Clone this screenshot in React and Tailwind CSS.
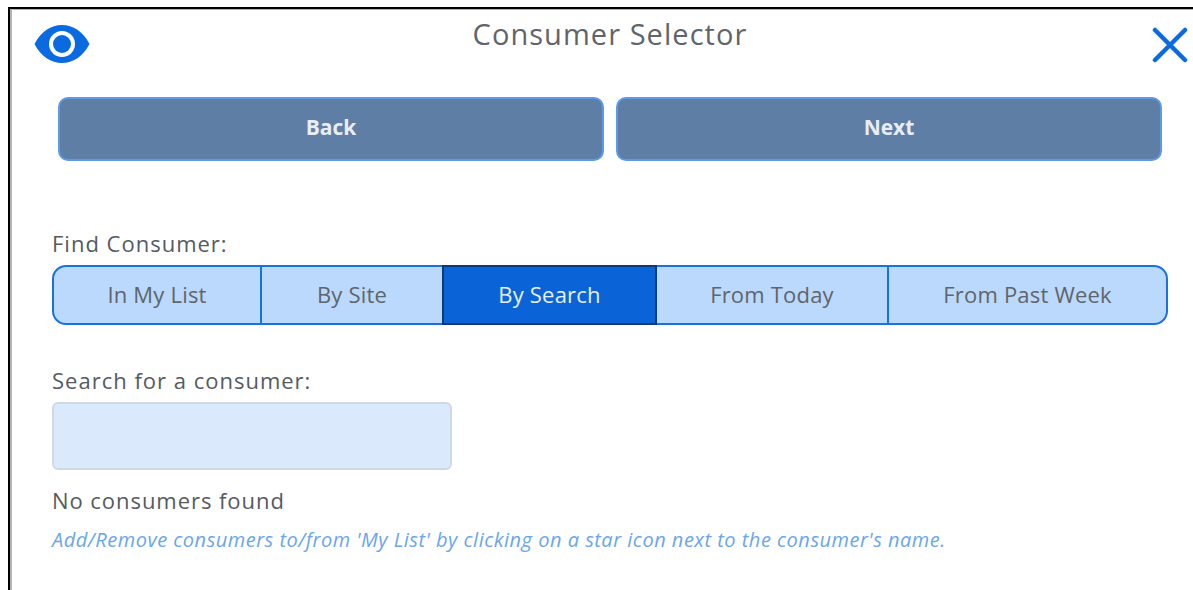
import { useState } from 'react';

const tabs = [
  { label: 'In My List', width: 'w-[210px]', edge: 'rounded-l-[14px] border-l-2' },
  { label: 'By Site', width: 'w-[184px]', edge: 'ml-[-2px] border-l-2' },
  { label: 'By Search', width: 'w-[215px]', edge: 'ml-[-2px] border-l-2' },
  { label: 'From Today', width: 'w-[234px]', edge: 'ml-[-2px] border-l-2' },
  { label: 'From Past Week', width: 'w-[281px]', edge: 'ml-[-2px] border-l-2 rounded-r-[14px]' },
];

function EyeIcon() {
  return (
    <svg width="56" height="40" viewBox="0 0 56 40" className="block">
      <path d="M0.5 20C7 7.500 17 1 28 1s21 6.500 27.500 19C49 32.500 39 39 28 39S7 32.500 0.500 20Z" fill="#0a6ae0" />
      <circle cx="28" cy="20" r="13" fill="#ffffff" />
      <circle cx="28" cy="20" r="9" fill="#0a6ae0" />
    </svg>
  );
}

function CloseIcon() {
  return (
    <svg width="36" height="36" viewBox="0 0 36 36" className="block">
      <path d="M3 3L33 33M33 3L3 33" stroke="#0a6ae0" strokeWidth="4.500" strokeLinecap="round" fill="none" />
    </svg>
  );
}

export default function App() {
  const [active, setActive] = useState('By Search');
  const [search, setSearch] = useState('');

  return (
    <div className="w-[1193px] h-[590px] overflow-hidden bg-white pl-[8px] pt-[7px] font-['Open_Sans','Liberation_Sans',sans-serif]">
      <div className="h-full border-l-2 border-t-2 border-black pl-[42px] pr-[25px] shadow-[inset_2px_1px_0_#b4b4b4]">
        <div className="relative h-[88px]">
          <div className="absolute left-[-18px] top-[15px]">
            <EyeIcon />
          </div>
          <h1 className="pt-[5px] text-center text-[29px] leading-[40px] font-normal tracking-[1.050px] text-[#5f656b]">
            Consumer Selector
          </h1>
          <div className="absolute right-[-20px] top-[18px]">
            <CloseIcon />
          </div>
        </div>

        <div className="flex gap-[12px] px-[6px]">
          <button className="h-[64px] flex-1 rounded-[10px] border-2 border-[#5b9bea] bg-[#5f7ea6] pb-[2px] text-[21px] font-bold text-[#e8edf3]">Back</button>
          <button className="h-[64px] flex-1 rounded-[10px] border-2 border-[#5b9bea] bg-[#5f7ea6] pb-[2px] text-[21px] font-bold text-[#e8edf3]">Next</button>
        </div>

        <p className="mt-[66px] text-[22px] leading-[32px] tracking-[1px] text-[#555b61]">Find Consumer:</p>
        <div className="mt-[6px] flex h-[60px] w-[1116px]">
          {tabs.map(tab => (
            <button
              key={tab.label}
              onClick={() => setActive(tab.label)}
              className={
                tab.width + ' ' + tab.edge + ' border-y-2 border-r-2 pb-[2px] text-[22px] tracking-[0.2px] ' +
                (active === tab.label
                  ? 'relative border-[#0a3a78] bg-[#0a64d8] text-[#e6f0fc]'
                  : 'border-[#1a72de] bg-[#bbd9fd] text-[#5f656b]')
              }
            >
              {tab.label}
            </button>
          ))}
        </div>

        <label className="mt-[39px] block text-[22px] leading-[32px] tracking-[1px] text-[#555b61]">Search for a consumer:</label>
        <input
          type="text"
          value={search}
          onChange={e => setSearch(e.target.value)}
          className="mt-[6px] block h-[68px] w-[400px] rounded-[6px] border-2 border-[#cfd9e6] bg-[#dbe9fd] outline-none"
        />
        <p className="mt-[14px] text-[22px] leading-[32px] tracking-[0.950px] text-[#555b61]">No consumers found</p>
        <p className="mt-[11px] text-[20px] leading-[26px] italic tracking-[0.500px] text-[#6aa6ec]">
          Add/Remove consumers to/from 'My List' by clicking on a star icon next to the consumer's name.
        </p>
      </div>
    </div>
  );
}
